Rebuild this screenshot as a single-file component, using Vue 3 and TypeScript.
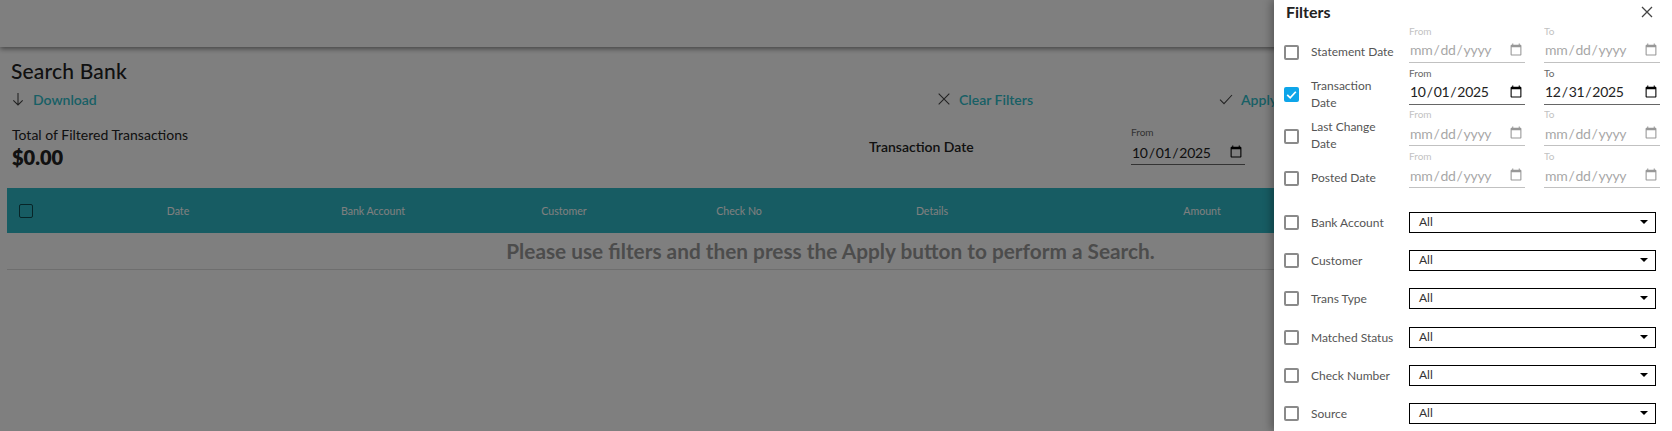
<script setup lang="ts">
interface DateFilter {
  label: string;
  from: string;
  to: string;
  checked: boolean;
}

const columns = ["Date", "Bank Account", "Customer", "Check No", "Details", "Amount", ""];

const dateFilters: DateFilter[] = [
  { label: "Statement Date", from: "", to: "", checked: false },
  { label: "Transaction Date", from: "2025-10-01", to: "2025-12-31", checked: true },
  { label: "Last Change Date", from: "", to: "", checked: false },
  { label: "Posted Date", from: "", to: "", checked: false },
];

const selectFilters = ["Bank Account", "Customer", "Trans Type", "Matched Status", "Check Number", "Source"];
</script>

<template>
  <div class="page">
    <header class="topbar"></header>

    <main class="content">
      <h1 class="title">Search Bank</h1>

      <div class="actions">
        <a class="action">
          <svg class="icon" viewBox="0 0 24 24"><path d="M12 3v18M5 14l7 7 7-7" /></svg>
          Download
        </a>
        <a class="action">
          <svg class="icon" viewBox="0 0 24 24"><path d="M4 4l16 16M20 4L4 20" /></svg>
          Clear Filters
        </a>
        <a class="action">
          <svg class="icon" viewBox="0 0 24 24"><path d="M3 13l6 6L21 6" /></svg>
          Apply
        </a>
      </div>

      <div class="summary">
        <div class="total">
          <div class="total-label">Total of Filtered Transactions</div>
          <div class="total-value">$0.00</div>
        </div>
        <div class="applied-label">Transaction Date</div>
        <label class="date-field applied-date">
          <span class="date-caption">From</span>
          <input type="date" value="2025-10-01" />
        </label>
      </div>

      <div class="table">
        <div class="table-head">
          <div class="head-check"><span class="head-box"></span></div>
          <div v-for="col in columns" :key="col" class="head-cell">{{ col }}</div>
        </div>
        <div class="table-empty">Please use filters and then press the Apply button to perform a Search.</div>
      </div>
    </main>

    <div class="scrim"></div>

    <aside class="drawer">
      <div class="drawer-head">
        <h2>Filters</h2>
        <svg class="close" viewBox="0 0 12 12"><path d="M1 1l10 10M11 1L1 11" /></svg>
      </div>

      <div class="date-filters">
        <div v-for="f in dateFilters" :key="f.label" class="date-row">
          <span class="box" :class="{ checked: f.checked }">
            <svg v-if="f.checked" viewBox="0 0 14 14"><path d="M3 7.4l2.8 2.7L11 4.4" /></svg>
          </span>
          <span class="row-label">{{ f.label }}</span>
          <label class="date-field" :class="{ off: !f.checked }">
            <span class="date-caption">From</span>
            <input type="date" :value="f.from" />
          </label>
          <label class="date-field" :class="{ off: !f.checked }">
            <span class="date-caption">To</span>
            <input type="date" :value="f.to" />
          </label>
        </div>
      </div>

      <div class="select-filters">
        <div v-for="name in selectFilters" :key="name" class="select-row">
          <span class="box"></span>
          <span class="row-label">{{ name }}</span>
          <div class="select">All</div>
        </div>
      </div>
    </aside>
  </div>
</template>

<style scoped>
.page {
  height: 431px;
  overflow: hidden;
  position: relative;
  background: #fff;
  font-family: "Lato", "Noto Sans", sans-serif;
  color: #222;
}

.topbar {
  height: 47px;
  background: #fff;
  box-shadow: 0 2px 5px rgba(0, 0, 0, 0.45);
}

.content {
  padding: 12px 6px 0 7px;
}

.title {
  margin: 0 0 0 4px;
  font-size: 21px;
  line-height: 24px;
  font-weight: 500;
  letter-spacing: 0.18px;
}

.actions {
  display: grid;
  grid-template-columns: 926px 282px 1fr;
  height: 24px;
  margin-top: 4px;
  padding-left: 3px;
  align-items: center;
}

.action {
  display: flex;
  align-items: center;
  gap: 7px;
  font-size: 14px;
  font-weight: 600;
  color: #30c0cb;
}

.icon {
  width: 16px;
  height: 16px;
  fill: none;
  stroke: #444;
  stroke-width: 1.6;
}

.summary {
  display: flex;
  align-items: flex-start;
  height: 52px;
  margin-top: 12px;
  padding-left: 5px;
}

.total {
  width: 857px;
  margin-top: 2px;
}

.total-label {
  font-size: 14px;
  line-height: 20px;
}

.total-value {
  font-size: 20px;
  line-height: 25px;
  font-weight: 800;
}

.applied-label {
  width: 262px;
  margin-top: 14px;
  line-height: 20px;
  font-size: 14px;
  font-weight: 600;
}

.applied-date {
  width: 114px;
  margin-top: 3px;
}

.table {
  margin-top: 13px;
}

.table-head {
  display: grid;
  grid-template-columns: 73px 196px 194px 188px 162px 224px 316px 1fr;
  height: 45px;
  align-items: center;
  background: #2eb8c6;
  color: #fff;
  font-size: 10.6px;
}

.head-check {
  padding-left: 12px;
}

.head-box {
  display: block;
  width: 12px;
  height: 12px;
  border: 1.5px solid #0f4a50;
  border-radius: 2px;
}

.head-cell {
  text-align: center;
}

.table-empty {
  height: 36px;
  line-height: 36px;
  padding-right: 12px;
  text-align: center;
  font-size: 20.8px;
  font-weight: 700;
  color: #999;
  border-bottom: 1px solid #ddd;
}

.scrim {
  position: absolute;
  inset: 0;
  background: rgba(0, 0, 0, 0.5);
}

.drawer {
  position: absolute;
  top: 0;
  right: 0;
  bottom: 0;
  width: 398px;
  box-sizing: border-box;
  padding: 0 12px 0 10px;
  background: #fff;
  box-shadow: -3px 0 8px rgba(0, 0, 0, 0.3);
}

.drawer-head {
  display: flex;
  justify-content: space-between;
  align-items: center;
  box-sizing: border-box;
  height: 25px;
  padding: 0 7px 2px 2px;
}

.drawer-head h2 {
  margin: 0;
  font-size: 16px;
  font-weight: 700;
}

.close {
  width: 12px;
  height: 12px;
  fill: none;
  stroke: #444;
  stroke-width: 1.3;
}

.date-row {
  display: grid;
  grid-template-columns: 27px 98px 116px 135px;
  grid-template-rows: 41.75px;
  align-items: center;
}

.date-row > .date-field {
  align-self: end;
  margin-bottom: 4px;
  width: 116px;
}

.date-row > .date-field + .date-field {
  margin-left: 19px;
}

.date-row .date-caption {
  margin-bottom: 1px;
}

.date-row > .box {
  margin-top: 14px;
}

.date-row > .row-label {
  margin-top: 12px;
  width: 86px;
}

.box {
  display: flex;
  box-sizing: border-box;
  width: 15px;
  height: 15px;
  border: 2px solid #8a8a8a;
  border-radius: 2px;
}

.box.checked {
  background: #0ea5e9;
  border: none;
}

.box svg {
  width: 15px;
  height: 15px;
  fill: none;
  stroke: #fff;
  stroke-width: 1.6;
}

.row-label {
  font-size: 12px;
  line-height: 17px;
  color: #555;
}

.date-field {
  display: block;
  color: #222;
}

.date-caption {
  display: block;
  margin-bottom: 2px;
  font-size: 10px;
  line-height: 12px;
  color: #666;
}

.date-field input {
  display: block;
  box-sizing: border-box;
  width: 100%;
  height: 25px;
  padding: 0;
  border: none;
  border-bottom: 1px solid #666;
  background: transparent;
  font-family: inherit;
  font-size: 14px;
  letter-spacing: -0.3px;
  color: #222;
  outline: none;
}

.date-field.off .date-caption,
.date-field.off input {
  opacity: 0.4;
}

.select-filters {
  margin-top: 11px;
}

.select-row {
  display: grid;
  grid-template-columns: 27px 98px 247px;
  height: 38.3px;
  align-items: center;
}

.select {
  position: relative;
  box-sizing: border-box;
  height: 21px;
  line-height: 18px;
  padding-left: 9px;
  border: 1px solid #000;
  font-size: 12px;
  color: #333;
}

.select::after {
  content: "";
  position: absolute;
  right: 7px;
  top: 7px;
  border-left: 4px solid transparent;
  border-right: 4px solid transparent;
  border-top: 4px solid #000;
}
</style>

<style>
html,
body {
  margin: 0;
  height: 100%;
  overflow: hidden;
}
</style>
